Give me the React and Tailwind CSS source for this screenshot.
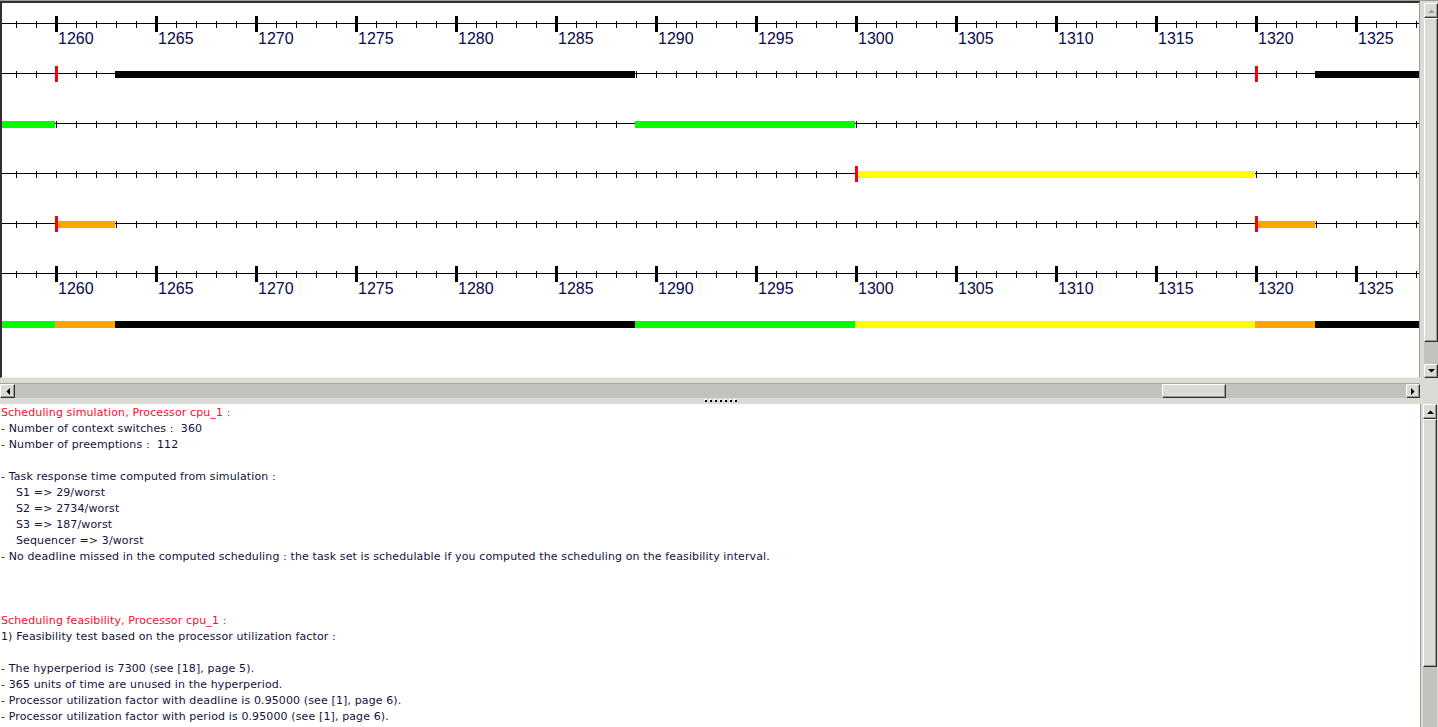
import React from 'react';

// time -> x in the chart (20px per unit, 1260 sits at x=56)
const tx = (t) => 56 + 20 * (t - 1260);

const ROW_Y = [23, 73, 123, 173, 223, 273];
const TICKS = [];
for (let x = 16; x < 1420; x += 20) TICKS.push(x);

const BARS = [
  { row: 1, from: 115, to: 635, color: '#000000' },
  { row: 1, from: 1315, to: 1420, color: '#000000' },
  { row: 2, from: 2, to: 55, color: '#00ff00' },
  { row: 2, from: 635, to: 855, color: '#00ff00' },
  { row: 3, from: 855, to: 1255, color: '#ffff00' },
  { row: 4, from: 55, to: 115, color: '#ffa500' },
  { row: 4, from: 1255, to: 1315, color: '#ffa500' },
];

const MARKERS = [
  { row: 1, t: 1260 },
  { row: 1, t: 1320 },
  { row: 3, t: 1300 },
  { row: 4, t: 1260 },
  { row: 4, t: 1320 },
];

const SUMMARY = [
  { from: 2, to: 55, color: '#00ff00' },
  { from: 55, to: 115, color: '#ffa500' },
  { from: 115, to: 635, color: '#000000' },
  { from: 635, to: 855, color: '#00ff00' },
  { from: 855, to: 1255, color: '#ffff00' },
  { from: 1255, to: 1315, color: '#ffa500' },
  { from: 1315, to: 1420, color: '#000000' },
];

const Axis = ({ y, major }) => (
  <g>
    <rect x={2} y={y} width={1418} height={1} fill="#000" />
    {TICKS.map((x) => {
      const isMajor = major && (x - 56) % 100 === 0;
      if (isMajor) {
        return (
          <g key={x}>
            <rect x={x - 1} y={y - 7} width={3} height={16} fill="#000" />
            <text
              x={x + 2}
              y={y + 21}
              fontSize={16}
              fontFamily="Liberation Sans, Arial, sans-serif"
              fill="#0a0a4a"
            >
              {1260 + ((x - 56) / 100) * 5}
            </text>
          </g>
        );
      }
      return <rect key={x} x={x} y={y - 2} width={1} height={7} fill="#000" />;
    })}
  </g>
);

const Chart = () => (
  <svg width={1417} height={374} viewBox="2 3 1417 374" className="block bg-white">
    <Axis y={ROW_Y[0]} major />
    <Axis y={ROW_Y[1]} />
    <Axis y={ROW_Y[2]} />
    <Axis y={ROW_Y[3]} />
    <Axis y={ROW_Y[4]} />
    <Axis y={ROW_Y[5]} major />
    {BARS.map((b, i) => (
      <rect key={i} x={b.from} y={ROW_Y[b.row] - 2} width={b.to - b.from} height={7} fill={b.color} />
    ))}
    {MARKERS.map((m, i) => (
      <rect key={i} x={tx(m.t) - 1} y={ROW_Y[m.row] - 7} width={3} height={16} fill="#ff0000" />
    ))}
    {SUMMARY.map((b, i) => (
      <rect key={i} x={b.from} y={321} width={b.to - b.from} height={7} fill={b.color} />
    ))}
  </svg>
);

const Arrow = ({ dir, disabled }) => {
  const pts = {
    up: '0,4 7,4 3.5,0.5',
    down: '0,0 7,0 3.5,3.5',
    left: '4,0 4,7 0.5,3.5',
    right: '0,0 0,7 3.5,3.5',
  }[dir];
  const vertical = dir === 'up' || dir === 'down';
  return (
    <svg width={vertical ? 7 : 4} height={vertical ? 4 : 7} viewBox={vertical ? '0 0 7 4' : '0 0 4 7'}>
      <polygon points={pts} fill={disabled ? '#a09d98' : '#000'} />
    </svg>
  );
};

const Btn = ({ className = '', children }) => (
  <div
    className={`flex items-center justify-center bg-[#dcdad5] border border-t-white border-l-white border-r-[#303030] border-b-[#303030] shadow-[inset_-1px_-1px_0_#9d9a94] ${className}`}
  >
    {children}
  </div>
);

const Line = ({ children, red, indent }) => (
  <div className={`h-[16px] whitespace-pre ${red ? 'text-[#ff0a2a]' : 'text-[#16103a]'} ${indent ? 'pl-[16px]' : 'pl-[1px]'}`}>
    {children}
  </div>
);

const App = () => {
  return (
    <div className="w-[1438px] h-[727px] bg-[#dcdad5] overflow-hidden flex flex-col">
      {/* Top: gantt chart */}
      <div className="h-[383px] flex border-t border-[#a09d98]">
        <div className="w-[1420px] flex flex-col">
          <div className="flex border-t-2 border-l-2 border-t-[#303030] border-l-[#303030] border-r border-r-[#a09d98] border-b border-b-[#f0efec]">
            <Chart />
          </div>
        </div>
        <div className="ml-[4px] w-[14px] h-[375px] mt-[2px] flex flex-col bg-[#c4c2bd]">
          <Btn className="h-[15px]">
            <Arrow dir="up" disabled />
          </Btn>
          <Btn className="h-[324px]" />
          <div className="flex-1" />
          <Btn className="h-[14px]">
            <Arrow dir="down" />
          </Btn>
        </div>
      </div>

      {/* Horizontal scrollbar */}
      <div className="h-[15px] w-[1420px] flex bg-[#c4c2bd] border-t border-[#a8a59f]">
        <Btn className="w-[15px]">
          <Arrow dir="left" />
        </Btn>
        <div className="w-[1147px]" />
        <Btn className="w-[64px]" />
        <div className="flex-1" />
        <Btn className="w-[14px]">
          <Arrow dir="right" />
        </Btn>
      </div>

      {/* Splitter grip */}
      <div className="h-[6px] flex items-center justify-center gap-[3px] pl-[4px]">
        {[0, 1, 2, 3, 4, 5, 6].map((i) => (
          <span key={i} className="w-[2px] h-[2px] bg-black shadow-[-1px_-1px_0_#fff]" />
        ))}
      </div>

      {/* Bottom: results text */}
      <div className="flex-1 flex min-h-0">
        <div className="w-[1421px] bg-white border-r border-[#a09d98] overflow-hidden pt-[1px] text-[11px] leading-[16px] tracking-[0.12px] font-['DejaVu_Sans',sans-serif]">
          <Line red>Scheduling simulation, Processor cpu_1 :</Line>
          <Line>- Number of context switches :  360</Line>
          <Line>- Number of preemptions :  112</Line>
          <Line> </Line>
          <Line>- Task response time computed from simulation :</Line>
          <Line indent>S1 =&gt; 29/worst</Line>
          <Line indent>S2 =&gt; 2734/worst</Line>
          <Line indent>S3 =&gt; 187/worst</Line>
          <Line indent>Sequencer =&gt; 3/worst</Line>
          <Line>- No deadline missed in the computed scheduling : the task set is schedulable if you computed the scheduling on the feasibility interval.</Line>
          <Line> </Line>
          <Line> </Line>
          <Line> </Line>
          <Line red>Scheduling feasibility, Processor cpu_1 :</Line>
          <Line>1) Feasibility test based on the processor utilization factor :</Line>
          <Line> </Line>
          <Line>- The hyperperiod is 7300 (see [18], page 5).</Line>
          <Line>- 365 units of time are unused in the hyperperiod.</Line>
          <Line>- Processor utilization factor with deadline is 0.95000 (see [1], page 6).</Line>
          <Line>- Processor utilization factor with period is 0.95000 (see [1], page 6).</Line>
        </div>
        <div className="ml-[2px] w-[14px] flex flex-col bg-[#c4c2bd]">
          <Btn className="h-[15px]">
            <Arrow dir="up" />
          </Btn>
          <Btn className="h-[248px]" />
          <div className="flex-1" />
        </div>
      </div>
    </div>
  );
};

export default App;
